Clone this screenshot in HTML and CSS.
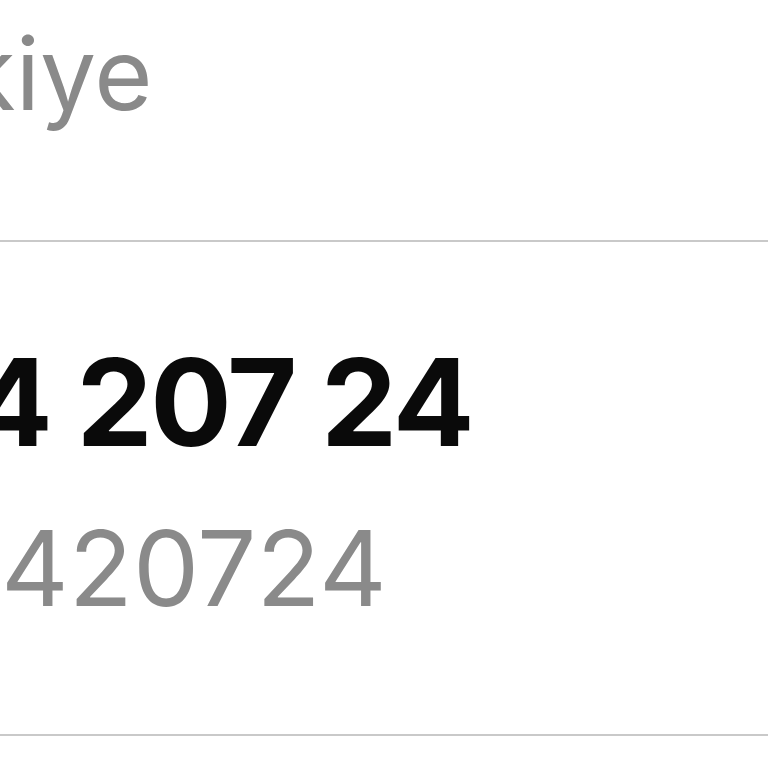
FILE: index.html
```html
<!DOCTYPE html>
<html lang="tr">
<head>
<meta charset="utf-8">
<title>İletişim</title>
<link rel="stylesheet" href="styles.css">
</head>
<body>
<ul class="list">
  <li class="row row-country">
    <span class="country">Türkiye</span>
  </li>
  <li class="row row-phone">
    <span class="phone">0212 444 207 24</span>
    <span class="phone-raw">021244420724</span>
  </li>
</ul>
</body>
</html>
```
FILE: styles.css
```css
html, body {
  margin: 0;
  padding: 0;
  background: #ffffff;
  overflow: hidden;
}
body {
  width: 768px;
  height: 768px;
  font-family: Inter, Roboto, "Liberation Sans", Arial, sans-serif;
}
.list {
  list-style: none;
  margin: 0;
  padding: 0;
}
.row {
  display: flex;
  flex-direction: column;
  border-bottom: 2px solid #c9c9c9;
  white-space: nowrap;
}
.row-country {
  padding: 11px 0 103px;
}
.country {
  display: block;
  margin-left: -197px;
  font-size: 100px;
  line-height: 126px;
  color: #8a8a8a;
}
.row-phone {
  padding: 90px 0 101px;
}
.phone {
  display: block;
  margin-left: -490px;
  font-size: 121px;
  line-height: 140px;
  font-weight: 700;
  letter-spacing: -2.5px;
  color: #0a0a0a;
}
.phone-raw {
  display: block;
  margin-top: 31px;
  margin-left: -370px;
  font-size: 105px;
  line-height: 130px;
  color: #8a8a8a;
}
```
